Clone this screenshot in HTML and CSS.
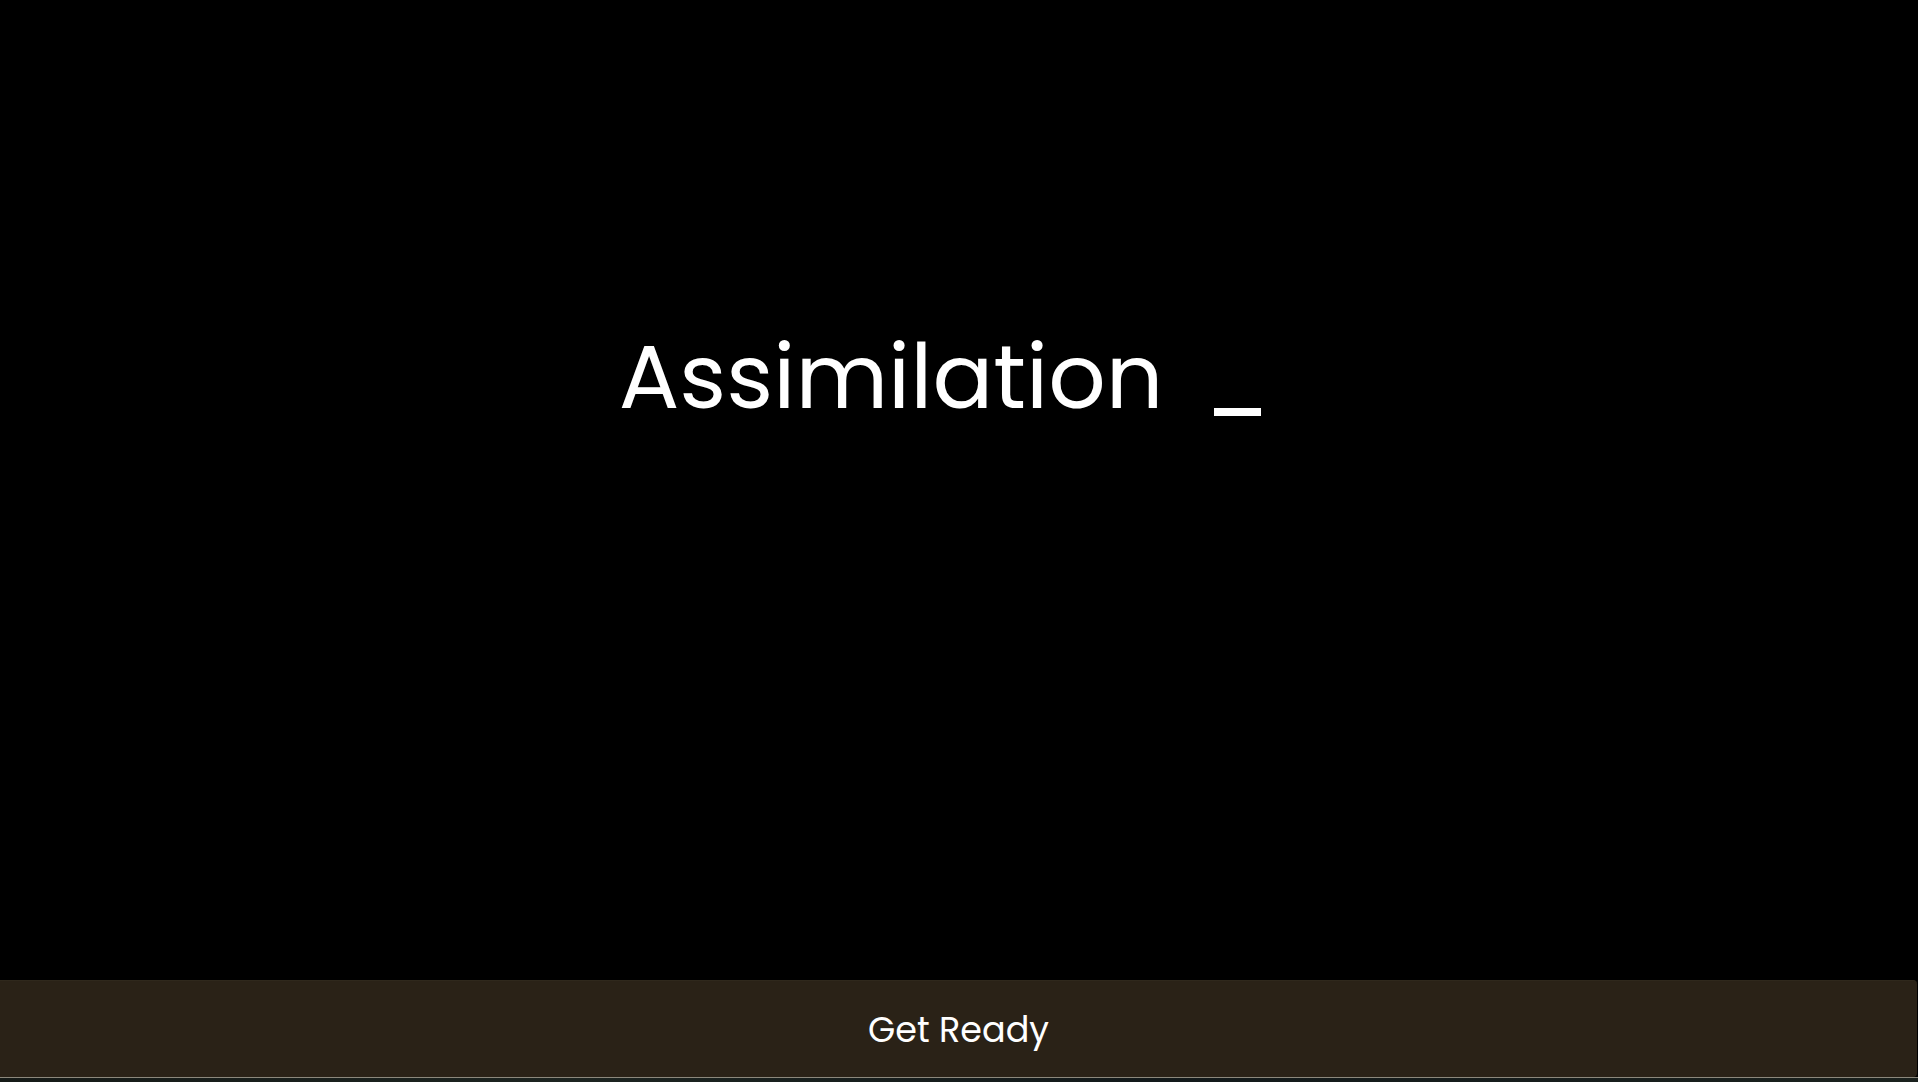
FILE: index.html
```html
<!DOCTYPE html>
<html>
<head>
<meta charset="utf-8">
<link rel="stylesheet" href="styles.css">
</head>
<body>
<div class="page">
  <main class="stage">
    <h1 class="title"><span class="word">Assimilation</span><span class="cursor"></span></h1>
  </main>
  <footer class="bar">
    <span class="bar-text">Get Ready</span>
  </footer>
  <div class="peek"></div>
</div>
</body>
</html>
```
FILE: styles.css
```css
html, body {
  margin: 0;
  padding: 0;
  background: #000;
}
.page {
  width: 1918px;
  height: 1082px;
  display: flex;
  flex-direction: column;
  overflow: hidden;
  font-family: "Poppins", "Inter", "Noto Sans", sans-serif;
  color: #fff;
}
.stage {
  flex: 1;
  display: flex;
  justify-content: center;
  align-items: flex-start;
  padding-top: 327px;
  padding-right: 38px;
}
.title {
  margin: 0;
  font-weight: 400;
  font-size: 90px;
  line-height: 1.1;
  letter-spacing: 0;
  white-space: nowrap;
}
.cursor {
  display: inline-block;
  width: 47px;
  height: 8px;
  background: #fff;
  margin-left: 51px;
  margin-bottom: -8px;
  vertical-align: baseline;
}
.bar {
  height: 97px;
  width: 1917px;
  background: #2a2217;
  border-top-right-radius: 4px;
  border-bottom-right-radius: 4px;
  display: flex;
  align-items: center;
  justify-content: center;
  border-top: 1px solid #2f281c;
  box-sizing: border-box;
}
.bar-text {
  font-size: 35px;
  font-weight: 400;
  letter-spacing: 0;
}
.peek {
  height: 4px;
  border-top: 1px solid #8c887c;
  background: linear-gradient(90deg, #151a17, #1c2420 30%, #12191a 60%, #1a211d);
}
```
